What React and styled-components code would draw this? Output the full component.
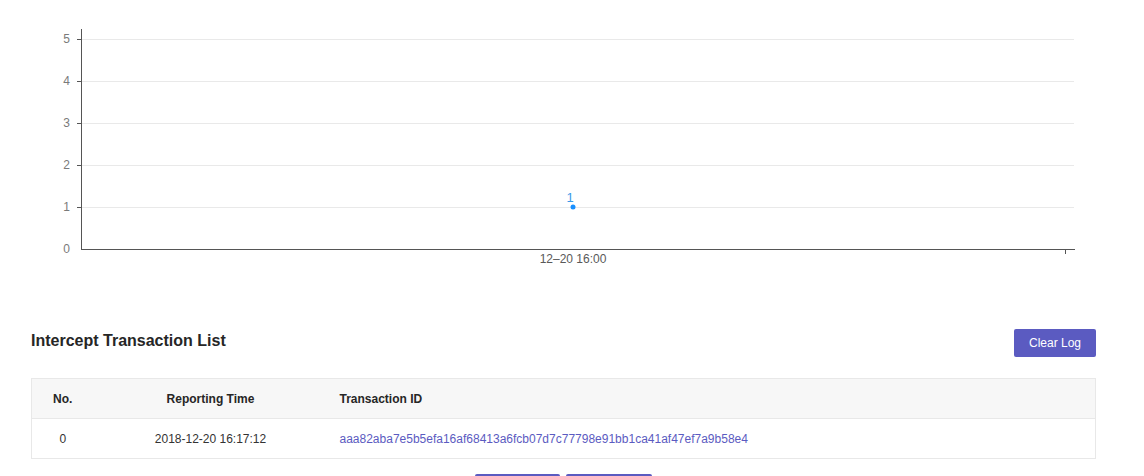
import React from "react";
import styled, { createGlobalStyle } from "styled-components";

const GlobalStyle = createGlobalStyle`
  body {
    margin: 0;
    background: #fff;
    font-family: "Liberation Sans", Arial, Helvetica, sans-serif;
    color: #333;
  }
`;

const ticks = [0, 1, 2, 3, 4, 5];
const rows = [
  {
    no: 0,
    time: "2018-12-20 16:17:12",
    id: "aaa82aba7e5b5efa16af68413a6fcb07d7c77798e91bb1ca41af47ef7a9b58e4",
  },
];

function Chart() {
  const left = 81;
  const right = 1075;
  const bottom = 249;
  const step = 42;
  const y = (v) => bottom - v * step;
  return (
    <ChartBox>
      <svg width="1144" height="290" viewBox="0 0 1144 290">
        {ticks.map((t) => (
          <g key={t}>
            {t > 0 && (
              <line x1={left + 1} x2={right - 1} y1={y(t) + 0.5} y2={y(t) + 0.5} stroke="#e9e9e9" />
            )}
            {t > 0 && (
              <line x1={left - 4} x2={left} y1={y(t) + 0.5} y2={y(t) + 0.5} stroke="#555" />
            )}
            <text x={70} y={y(t) + 4} textAnchor="end" fontSize="12" fill="#7a7a7a">
              {t}
            </text>
          </g>
        ))}
        <line x1={left + 0.5} x2={left + 0.5} y1={29} y2={bottom + 1} stroke="#555" />
        <line x1={left} x2={right} y1={bottom + 0.5} y2={bottom + 0.5} stroke="#555" />
        <line x1={1065.5} x2={1065.5} y1={bottom} y2={bottom + 5} stroke="#555" />
        <text x={573} y={263} textAnchor="middle" fontSize="12" fill="#595959">
          12–20 16:00
        </text>
        <circle cx={573} cy={y(1)} r={2.5} fill="#1890ff" />
        <text x={570} y={y(1) - 5} textAnchor="middle" fontSize="13" fill="#3a9be9">
          1
        </text>
      </svg>
    </ChartBox>
  );
}

function App() {
  return (
    <>
      <GlobalStyle />
      <Page>
        <Chart />
        <Section>
          <HeaderRow>
            <Title>Intercept Transaction List</Title>
            <Button>Clear Log</Button>
          </HeaderRow>
          <Table>
            <thead>
              <tr>
                <Th $w={62} $align="center">No.</Th>
                <Th $w={234} $align="center">Reporting Time</Th>
                <Th>Transaction ID</Th>
              </tr>
            </thead>
            <tbody>
              {rows.map((r) => (
                <tr key={r.no}>
                  <Td $align="center">{r.no}</Td>
                  <Td $align="center">{r.time}</Td>
                  <Td>
                    <Link href="#">{r.id}</Link>
                  </Td>
                </tr>
              ))}
            </tbody>
          </Table>
          <Pager>
            <PageButton $w={85}>Previous</PageButton>
            <PageButton $w={86}>Next</PageButton>
          </Pager>
        </Section>
      </Page>
    </>
  );
}

const Page = styled.div`
  width: 1144px;
  height: 476px;
  overflow: hidden;
`;

const ChartBox = styled.div`
  height: 329px;
  svg {
    display: block;
    font-family: "Liberation Sans", Arial, sans-serif;
  }
`;

const Section = styled.div`
  padding: 0 48px 0 31px;
`;

const HeaderRow = styled.div`
  display: flex;
  justify-content: space-between;
  align-items: center;
  height: 28px;
`;

const Title = styled.h2`
  margin: 0 0 5px;
  font-size: 16px;
  font-weight: bold;
  color: #262626;
`;

const Button = styled.button`
  width: 82px;
  height: 28px;
  border: none;
  border-radius: 2px;
  background: #5b5bc1;
  color: #fff;
  font-family: inherit;
  font-size: 12px;
  padding: 0;
`;

const Table = styled.table`
  margin-top: 21px;
  width: 100%;
  border-collapse: collapse;
  border: 1px solid #e8e8e8;
  font-size: 12px;
`;

const Th = styled.th`
  width: ${(p) => (p.$w ? `${p.$w}px` : "auto")};
  height: 40px;
  padding: 0 12px;
  background: #f7f7f7;
  border-bottom: 1px solid #e8e8e8;
  text-align: ${(p) => p.$align || "left"};
  font-weight: bold;
  color: #262626;
  box-sizing: border-box;
`;

const Td = styled.td`
  height: 39px;
  padding: 0 12px;
  text-align: ${(p) => p.$align || "left"};
  color: #333;
`;

const Link = styled.a`
  color: #5b5bc1;
  text-decoration: none;
`;

const Pager = styled.div`
  display: flex;
  justify-content: center;
  gap: 6px;
  margin-top: 15px;
`;

const PageButton = styled.button`
  width: ${(p) => p.$w}px;
  height: 28px;
  border: none;
  border-radius: 2px;
  background: #5b5bc1;
  color: #fff;
  font-family: inherit;
  font-size: 12px;
`;

export default App;
